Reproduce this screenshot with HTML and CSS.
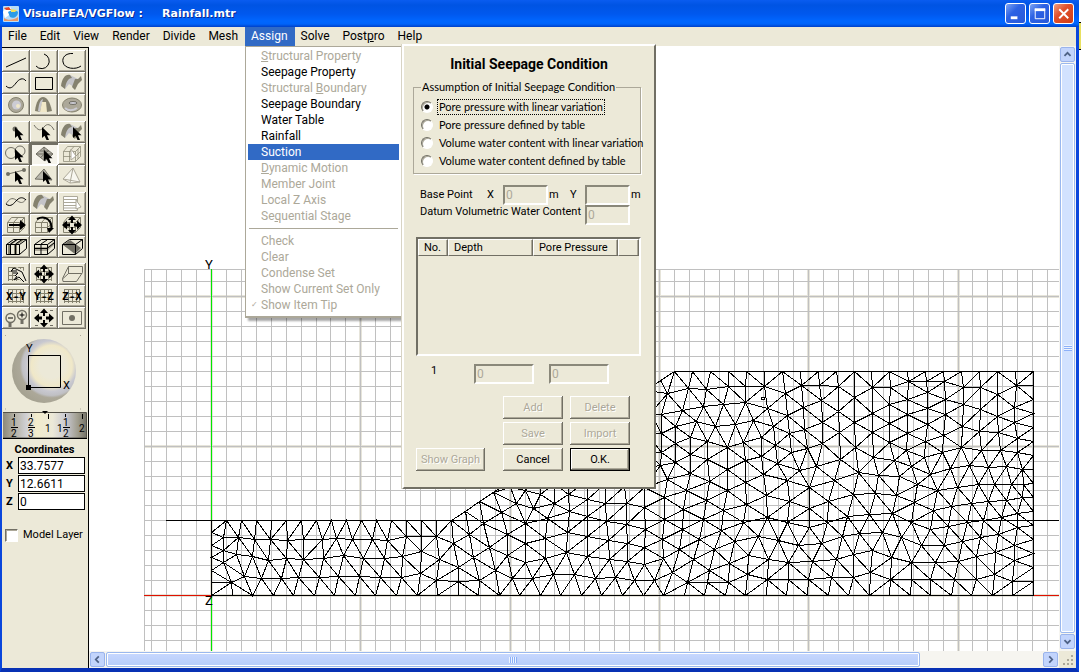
FILE: index.html
```html
<!DOCTYPE html>
<html lang="en">
<head>
<meta charset="utf-8">
<title>VisualFEA/VGFlow : Rainfall.mtr</title>
<link rel="stylesheet" href="styles.css">
</head>
<body>
<svg class="defs" aria-hidden="true">
  <defs>
    <radialGradient id="ball" cx="0.62" cy="0.42" r="0.64">
      <stop offset="0.3" stop-color="#ece9d8"/><stop offset="0.5" stop-color="#f0e8c8"/><stop offset="0.62" stop-color="#c8c8d0"/><stop offset="0.72" stop-color="#c0c0c4"/><stop offset="0.78" stop-color="#aca899"/><stop offset="1" stop-color="#a4a190"/>
    </radialGradient>
    <linearGradient id="drum" x1="0" x2="1" y1="0" y2="0">
      <stop offset="0" stop-color="#8c897a"/><stop offset="0.14" stop-color="#b4b1a4"/><stop offset="0.28" stop-color="#d0d0d4"/><stop offset="0.4" stop-color="#f2eccc"/><stop offset="0.6" stop-color="#ece9d8"/><stop offset="0.76" stop-color="#c8c8d0"/><stop offset="0.9" stop-color="#a09d8e"/><stop offset="1" stop-color="#77756a"/>
    </linearGradient>
    <path id="cursor" d="M0 0V11L2.5 8.700L4.500 13H7L5 8.200H8.500Z"/>
    <g id="surface"><path d="M4 14C5 8 8 3 12 3L20 7L16 15L11 12L7 17Z" fill="#c4c4c8"/><path d="M3 14C4 7 7 2 12 3L14 6C10 6 8 10 7 17Z" fill="#85826f"/><path d="M17 7L20 7L23 4L24 8L20 12L17 18L14 15Z" fill="#85826f"/></g>
    <g id="netgrid" fill="none" stroke="#85826f"><path d="M6.500 4V18M10.500 4V18M14.500 4V18M18.500 4V18M21.500 4V18M6 4.500H22M6 8.500H22M6 12.500H22M6 16.500H22"/></g>
    <g id="cube" fill="none" stroke="#85826f"><path d="M5.500 8.500H17.500V18.500H5.500ZM5.500 8.500L9.500 3.500H22.500L17.500 8.500M22.500 3.500V13.500L17.500 18.500M5.500 13.500H17.500L22.500 8.500M11.500 18V8.500L16 3.500M20 6V16"/></g>
    <g id="fourway"><path d="M14 1.500L18 6H15V9H13V6H10ZM14 20.500L18 16H15V13H13V16H10ZM4 11L9 6.500V9.500H12V12.500H9V15.500ZM24 11L19 6.500V9.500H16V12.500H19V15.500Z"/></g>
    <g id="box" fill="none" stroke="#000"><path d="M4.500 8.500H17.500V18.500H4.500ZM4.500 8.500L11.500 3.500H24.500L17.500 8.500M24.500 3.500V12.500L17.500 18.500"/></g>
  </defs>
</svg>

<div class="desktop">
<div class="window">
  <header class="titlebar">
    <svg class="app-icon" viewBox="0 0 16 16"><rect width="16" height="16" rx="1" fill="#b8dcf8"/><path d="M0 6C3 1 6 0 8 2L6 9L2 12Z" fill="#fff"/><path d="M1 2L6 1L8 4L3 4Z" fill="#e84828"/><path d="M5 6C8 4 13 4 15 6C15 11 10 13 7 11Z" fill="#2a9be8"/><path d="M8 3L14 4L12 6L8 6Z" fill="#f0e060"/><path d="M1 12C5 15 11 14 15 11V15H1Z" fill="#e89868"/></svg>
    <h1 class="title"><span>VisualFEA/VGFlow :</span><span>Rainfall.mtr</span></h1>
    <button class="caption" aria-label="Minimize"><svg viewBox="0 0 20 20"><path d="M5 14.500H12" stroke="#fff" stroke-width="3"/></svg></button>
    <button class="caption" aria-label="Maximize"><svg viewBox="0 0 20 20"><path d="M5.500 5V15.500H15.500V5" fill="none" stroke="#fff"/><path d="M5 6H16" stroke="#fff" stroke-width="3"/></svg></button>
    <button class="caption close" aria-label="Close"><svg viewBox="0 0 20 20"><path d="M5.500 5.500L15 15M15 5.500L5.500 15" stroke="#fff" stroke-width="2"/></svg></button>
  </header>

  <nav class="menubar">
    <button>File</button><button>Edit</button><button>View</button><button>Render</button><button>Divide</button><button>Mesh</button>
    <div class="menu-holder">
      <button class="open" aria-expanded="true">Assign</button>
      <div class="dropdown" role="menu">
        <button role="menuitem" disabled><u>S</u>tructural Property</button>
        <button role="menuitem">Seepage Property</button>
        <button role="menuitem" disabled>Structural <u>B</u>oundary</button>
        <button role="menuitem">Seepage Boundary</button>
        <button role="menuitem">Water Table</button>
        <button role="menuitem">Rainfall</button>
        <button role="menuitem" class="selected">Suction</button>
        <button role="menuitem" disabled><u>D</u>ynamic Motion</button>
        <button role="menuitem" disabled>Member Joint</button>
        <button role="menuitem" disabled>Local Z Axis</button>
        <button role="menuitem" disabled>Se<u>q</u>uential Stage</button>
        <hr>
        <button role="menuitem" disabled>Check</button>
        <button role="menuitem" disabled>Clear</button>
        <button role="menuitem" disabled>Condense Set</button>
        <button role="menuitem" disabled>Show Current Set Only</button>
        <button role="menuitem" class="ticked" disabled>Show Item Tip</button>
      </div>
    </div>
    <button>Solve</button><button>Post<u>p</u>ro</button><button>Help</button>
  </nav>

  <div class="body">
    <aside class="tools">
      <div class="toolgroup">
        <button aria-label="Line"><svg viewBox="0 0 28 22"><path class="k" d="M4 17L24 8"/></svg></button>
        <button aria-label="Arc"><svg viewBox="0 0 28 22"><path class="k" d="M14 4A7.500 7.500 0 1 1 6 16"/></svg></button>
        <button aria-label="Ellipse arc"><svg viewBox="0 0 28 22"><path class="k" d="M15 3.500C7 3 4 8 5 12C6 19 18 20 23 16"/></svg></button>
        <button aria-label="Curve"><svg viewBox="0 0 28 22"><path class="k" d="M4 14C8 18 11 15 14 11S21 5 24 9"/></svg></button>
        <button aria-label="Rectangle"><svg viewBox="0 0 28 22"><path class="k" d="M5.500 5.500H22.500V17.500H5.500Z"/></svg></button>
        <button aria-label="Surface"><svg viewBox="0 0 28 22"><use href="#surface"/></svg></button>
        <button aria-label="Sphere"><svg viewBox="0 0 28 22"><circle cx="14" cy="11" r="7.500" fill="#aca899" stroke="#85826f"/><circle cx="14.500" cy="11" r="4.500" fill="#ccccd4"/><circle cx="16" cy="12" r="2" fill="#f0e8c8"/></svg></button>
        <button aria-label="Arch"><svg viewBox="0 0 28 22"><path d="M5 17C6 8 9 3 13 3S20 8 22 17L17 18H10Z" fill="#85826f"/><path d="M8 17C9 9 10 6 13 5L10 18Z" fill="#c8c8cc"/><path d="M10 18L12 8L16 8L17 18Z" fill="#f0e8c8"/></svg></button>
        <button aria-label="Torus"><svg viewBox="0 0 28 22"><ellipse cx="14" cy="11" rx="9.500" ry="7" fill="#aca899" stroke="#85826f"/><ellipse cx="15" cy="9" rx="4" ry="1.500" fill="#ccccd4" stroke="#716f64"/><path d="M7 14C10 17 15 17 19 14" fill="none" stroke="#ccccd4" stroke-width="2"/></svg></button>
      </div>
      <div class="toolgroup">
        <button aria-label="Pick point"><svg viewBox="0 0 28 22"><circle cx="13" cy="8" r="2.500" fill="#716f64"/><use href="#cursor" x="13" y="6"/></svg></button>
        <button aria-label="Pick curve"><svg viewBox="0 0 28 22"><path class="g" d="M4 4C8 10 11 10 14 6S21 3 24 9"/><use href="#cursor" x="12" y="6"/></svg></button>
        <button aria-label="Pick surface"><svg viewBox="0 0 28 22"><use href="#surface"/><use href="#cursor" x="15" y="6"/></svg></button>
        <button aria-label="Pick loop"><svg viewBox="0 0 28 22"><circle class="g" cx="9" cy="10" r="5.500"/><circle class="g" cx="18" cy="8" r="5"/><use href="#cursor" x="13" y="6"/></svg></button>
        <button class="pressed" aria-label="Pick mesh" aria-pressed="true"><svg viewBox="0 0 28 22"><path d="M6 11L14 4L23 11L15 18Z" fill="#b8b6ac" stroke="#716f64"/><path class="g" d="M6 11H23M10 8H19M14 4V18M10 15L19 7"/><use href="#cursor" x="14" y="7"/></svg></button>
        <button aria-label="Pick solid" disabled><svg viewBox="0 0 28 22"><use href="#cube" opacity="0.700"/><path d="M13 6V17L18 13Z" fill="#fff" stroke="#aca899"/></svg></button>
        <button aria-label="Pick node"><svg viewBox="0 0 28 22"><path class="g" d="M6 9L22 5"/><circle cx="6" cy="9" r="2" fill="#716f64"/><circle cx="22" cy="5" r="2" fill="#716f64"/><use href="#cursor" x="13" y="6"/></svg></button>
        <button aria-label="Pick element"><svg viewBox="0 0 28 22"><path d="M5 14L14 4L22 15Z" fill="#b8b6ac" stroke="#716f64"/><use href="#cursor" x="13" y="6"/></svg></button>
        <button aria-label="Pick tetrahedron" disabled><svg viewBox="0 0 28 22"><path d="M5 14L15 3L22 17L12 18ZM15 3L12 18M5 14L22 17" fill="#f8f7f0" stroke="#aca899"/></svg></button>
      </div>
      <div class="toolgroup">
        <button aria-label="Blend curves"><svg viewBox="0 0 28 22"><path class="g" d="M4 12C7 7 10 5 14 8S21 12 24 7"/><path class="k" d="M4 12C9 16 12 11 15 8S21 5 24 8"/></svg></button>
        <button aria-label="Blend surfaces"><svg viewBox="0 0 28 22"><use href="#surface"/></svg></button>
        <button aria-label="List" disabled><svg viewBox="0 0 28 22"><path d="M5.500 4.500H19.500V18.500H5.500ZM5 7.500H19M5 10.500H19M5 13.500H19M5 16H19" fill="#fff" stroke="#aca899"/><path d="M18 8V17L23 15Z" fill="#fff" stroke="#aca899"/></svg></button>
        <button aria-label="Move"><svg viewBox="0 0 28 22"><use href="#cube"/><path d="M7 10H18V6L24 11L18 16V12H7Z"/></svg></button>
        <button aria-label="Rotate"><svg viewBox="0 0 28 22"><use href="#cube"/><path d="M7 5C15 1 23 6 21 16" fill="none" stroke="#000" stroke-width="2"/><path d="M17 14H24L19 19Z"/></svg></button>
        <button aria-label="Scale"><svg viewBox="0 0 28 22"><use href="#cube"/><use href="#fourway"/></svg></button>
        <button aria-label="Slice X"><svg viewBox="0 0 28 22"><path d="M6 9L13 4H16L9 9V18H6ZM12 9L19 4H22L15 9V18H12Z" fill="#85826f"/><use href="#box"/><path class="k" d="M8.500 18V8L15 3.500M13.500 18V8L20 3.500"/></svg></button>
        <button aria-label="Slice Y"><svg viewBox="0 0 28 22"><path d="M5 11H17L24 6V9L17 15H5Z" fill="#aca899"/><use href="#box"/><path class="k" d="M5 12.500H17L24 7M11 18V8L17 4"/></svg></button>
        <button aria-label="Slice Z"><svg viewBox="0 0 28 22"><path d="M5 9L12 4L23 12L17 18Z" fill="#716f64"/><use href="#box"/></svg></button>
      </div>
      <div class="toolgroup">
        <button aria-label="Pan"><svg viewBox="0 0 28 22"><use href="#netgrid"/><path d="M10 8L15 4L24 9V18H19L14 13Z" fill="#ece9d8"/><path class="k" d="M24 18L20 9L12 5L9 8L15 8M11 10L16 10L13 13M15 13L12 17L17 14L22 19"/></svg></button>
        <button aria-label="Shift view"><svg viewBox="0 0 28 22"><use href="#netgrid"/><use href="#fourway"/></svg></button>
        <button aria-label="Perspective"><svg viewBox="0 0 28 22"><path class="g" d="M4.500 15.500L10.500 3.500H24.500V9.500L18.500 18.500H5ZM10.500 3.500V10.500L4.500 16M10 10.500H24"/></svg></button>
        <button aria-label="X-Y view"><svg viewBox="0 0 28 22"><use href="#netgrid"/><text x="14" y="15">X-Y</text></svg></button>
        <button aria-label="Y-Z view"><svg viewBox="0 0 28 22"><use href="#netgrid"/><text x="14" y="15">Y-Z</text></svg></button>
        <button aria-label="Z-X view"><svg viewBox="0 0 28 22"><use href="#netgrid"/><text x="14" y="15">Z-X</text></svg></button>
        <button aria-label="Zoom"><svg viewBox="0 0 28 22"><path d="M8 14V20M20 12V17" stroke="#716f64" stroke-width="3"/><g fill="#ece9d8" stroke="#716f64" stroke-width="1.500"><circle cx="8.500" cy="11" r="4.500"/><circle cx="20" cy="8" r="4.500"/></g><path class="k" d="M6 11H11M17.500 8H22.500M20 5.500V10.500"/></svg></button>
        <button aria-label="Fit"><svg viewBox="0 0 28 22"><path class="g" d="M5 3.500H8M20 3.500H23M5 18.500H8M20 18.500H23"/><use href="#fourway"/></svg></button>
        <button aria-label="Centre"><svg viewBox="0 0 28 22"><path class="g" d="M4.500 4.500H23.500V17.500H4.500Z"/><circle cx="14" cy="11" r="3" fill="#716f64"/></svg></button>
      </div>

      <svg class="trackball" viewBox="0 2 84 77"><circle cx="41" cy="39" r="32" fill="url(#ball)"/><path d="M25.500 23.500H57.500V55.500H25.500Z" fill="none" stroke="#000"/><path d="M23 53H28V58H23Z"/><text x="23" y="20">Y</text><text x="60" y="57">X</text><path d="M2 3.500H3M77 3.500H78M2 77H3M77 77H78" stroke="#aca899"/></svg>
      <svg class="drum" viewBox="0 0 84 28"><path d="M0 2H83V27H0Z" fill="url(#drum)"/><path d="M0 1.500H83.500V27H0" fill="none" stroke="#55534a"/><path d="M0 27.500H84" stroke="#000"/><path d="M39 0H45L42 3Z"/><path d="M11.500 3V6M28.500 3V6M45.500 3V8M62.500 3V6M79.500 3V8" stroke="#000"/><g><text x="8" y="15">1</text><path d="M8 16.500H15M25 16.500H32M60 16.500H67" stroke="#000"/><text x="8" y="26">2</text><text x="25" y="15">2</text><text x="25" y="26">3</text><text x="42" y="21">1</text><text x="54" y="21">1</text><text x="60" y="15">1</text><text x="60" y="26">2</text><text x="76" y="21">2</text></g></svg>

      <h2 class="coords-title">Coordinates</h2>
      <div class="coords">
        <label for="cx">X</label><input id="cx" value="33.7577">
        <label for="cy">Y</label><input id="cy" value="12.6611">
        <label for="cz">Z</label><input id="cz" value="0">
      </div>
      <label class="layer"><input type="checkbox">Model Layer</label>
    </aside>

    <main class="view">
      <svg class="model" id="model" role="img" aria-label="Finite element mesh of the slope"></svg>
      <div class="vscroll">
        <button aria-label="Scroll up"><svg viewBox="0 0 15 15"><path d="M4 9L7.500 5.500L11 9"/></svg></button>
        <div class="thumb"></div>
        <button aria-label="Scroll down"><svg viewBox="0 0 15 15"><path d="M4 6L7.500 9.500L11 6"/></svg></button>
      </div>
      <div class="hscroll">
        <button aria-label="Scroll left"><svg viewBox="0 0 15 15"><path d="M9 4L5.500 7.500L9 11"/></svg></button>
        <div class="track"><div class="thumb"></div></div>
        <button aria-label="Scroll right"><svg viewBox="0 0 15 15"><path d="M6 4L9.500 7.500L6 11"/></svg></button>
      </div>
      <svg class="grip" viewBox="0 0 17 17"><path d="M12 4h2v2h-2zM12 8h2v2h-2zM12 12h2v2h-2zM8 8h2v2h-2zM8 12h2v2h-2zM4 12h2v2h-2z" fill="#aca899"/></svg>
    </main>
  </div>

  <form class="dialog" role="dialog" aria-labelledby="dlg-title">
    <h2 id="dlg-title">Initial Seepage Condition</h2>
    <fieldset>
      <legend>Assumption of Initial Seepage Condition</legend>
      <label><input type="radio" name="cond" checked><span class="focused">Pore pressure with linear variation</span></label>
      <label><input type="radio" name="cond"><span>Pore pressure defined by table</span></label>
      <label><input type="radio" name="cond"><span>Volume water content with linear variation</span></label>
      <label><input type="radio" name="cond"><span>Volume water content defined by table</span></label>
    </fieldset>
    <div class="base">
      <span>Base Point</span>
      <label for="bx">X</label><input id="bx" value="0" disabled><span>m</span>
      <label for="by">Y</label><input id="by" value="" disabled><span>m</span>
      <label class="datum" for="dw">Datum Volumetric Water Content</label><input id="dw" value="0" disabled>
    </div>
    <div class="list">
      <table>
        <thead><tr><th class="c-no">No.</th><th class="c-val">Depth</th><th class="c-val">Pore Pressure</th><th></th></tr></thead>
      </table>
    </div>
    <div class="entry">
      <span>1</span><input aria-label="Depth" value="0" disabled><input aria-label="Pore Pressure" value="0" disabled>
    </div>
    <div class="actions">
      <button type="button" class="col2" disabled>Add</button><button type="button" disabled>Delete</button>
      <button type="button" class="col2" disabled>Save</button><button type="button" disabled>Import</button>
      <button type="button" disabled>Show Graph</button><button type="button" class="col2">Cancel</button><button type="button" class="default">O.K.</button>
    </div>
  </form>
</div>
<div class="behind"></div>
</div>
<script src="mesh.js"></script>
</body>
</html>
```
FILE: styles.css
```css
* { box-sizing: border-box; }
body { margin: 0; font: 11px/16px Roboto, "Liberation Sans", Arial, sans-serif; color: #000; overflow: hidden; }
button, input { font: inherit; color: inherit; margin: 0; }
button { border: 0; padding: 0; background: #ece9d8; }
h1, h2 { margin: 0; font-weight: bold; }
.defs { position: absolute; width: 0; height: 0; }
.desktop { display: flex; height: 100vh; }
.behind { width: 2px; background: linear-gradient(#fff 22px, #000 22px 23px, #e8e060 23px 49px, #000 49px 50px, #fff 50px); }
.window { flex: 1; min-width: 0; position: relative; display: flex; flex-direction: column; border: solid #0a46dc; border-width: 0 3px 4px 2px; border-bottom-color: #0831b4; background: #ece9d8; }

.titlebar { flex: none; height: 27px; margin: 0 -3px 0 -2px; padding: 0 5px 0 3px; display: flex; align-items: center; gap: 3px; background: linear-gradient(#0a5cf0, #0054e3 5px, #0058ee 14px, #0066ff 21px, #0064fa 24px, #0040c8); }
.app-icon { width: 16px; height: 16px; }
.title { flex: 1; display: flex; gap: 19px; padding-left: 1px; font: bold 11px/16px "DejaVu Sans", Verdana, sans-serif; color: #fff; text-shadow: 1px 1px #0a2a90; }
.caption { width: 21px; height: 21px; border: 1px solid #fff; border-radius: 3px; background: linear-gradient(135deg, #7ea4f4, #2c62e4 40%, #2858d8); }
.caption svg { display: block; width: 19px; height: 19px; }
.caption.close { background: linear-gradient(135deg, #f0a080, #e0502c 40%, #d03c14); }

.menubar { flex: none; height: 19px; display: flex; font: 12px/16px Roboto, sans-serif; }
.menubar > button, .menu-holder > button { height: 19px; padding: 0 7px 2px 6px; }
.menu-holder { position: relative; }
.menu-holder > .open { background: #316ac5; color: #fff; }
.dropdown { position: absolute; z-index: 2; top: 100%; left: 0; width: 157px; padding: 1px 2px 3px; background: #fff; border: 1px solid #aca899; border-bottom-width: 2px; box-shadow: 3px 3px 2px rgba(0,0,0,.35); }
.dropdown button { display: block; width: 100%; height: 16px; line-height: 16px; padding-left: 13px; text-align: left; background: none; white-space: nowrap; }
.dropdown button:disabled { color: #aca899; }
.dropdown .selected { background: #316ac5; color: #fff; }
.dropdown hr { border: 0; height: 1px; margin: 4px 1px; background: #aca899; }
.dropdown .ticked::before { content: "✓"; float: left; margin-left: -10px; width: 10px; font: bold 8px/16px "DejaVu Sans", sans-serif; }

.body { flex: 1; min-height: 0; display: flex; }
.tools { flex: none; width: 87px; border: 1px solid #000; border-width: 1px 1px 0 0; margin-top: 1px; padding: 2px 1px 0 0; background: #ece9d8; }
.toolgroup { display: grid; grid-template-columns: repeat(3, 28px); grid-auto-rows: 22px; margin-bottom: 5px; }
.toolgroup button { box-shadow: inset -1px -1px #716f64, inset 1px 1px #fff, inset -2px -2px #aca899; }
.toolgroup button.pressed { background: #f6f4ec; box-shadow: inset 2px 2px #716f64, inset -1px -1px #fff; }
.toolgroup svg { display: block; width: 28px; height: 22px; }
.toolgroup text { font: bold 11px "DejaVu Sans Mono", monospace; text-anchor: middle; }
.k { fill: none; stroke: #000; }
.g { fill: none; stroke: #716f64; }
.trackball, .drum { display: block; width: 84px; margin-left: 1px; font: 11px Roboto, sans-serif; }
.trackball { height: 77px; }
.drum { height: 28px; font-size: 10px; }
.coords-title { margin-top: 3px; font-size: 11px; line-height: 15px; text-align: center; }
.coords { display: grid; grid-template-columns: 11px 67px; column-gap: 1px; row-gap: 1px; padding-left: 4px; }
.coords label { font-weight: bold; font-size: 11px; line-height: 17px; }
.coords input { width: 67px; height: 17px; padding: 0 1px; border: 1px solid #000; background: #fff; font-size: 12px; line-height: 15px; }
.layer { display: flex; align-items: center; gap: 5px; margin: 17px 0 0 3px; white-space: nowrap; }
.layer input { appearance: none; width: 13px; height: 13px; background: #fff; border: 1px solid; border-color: #716f64 #fff #fff #716f64; box-shadow: inset 1px 1px #aca899; }

.view { flex: 1; min-width: 0; display: grid; grid-template: minmax(0, 1fr) 17px / minmax(0, 1fr) 17px; background: #fff; }
.model { width: 100%; height: 100%; display: block; shape-rendering: crispEdges; font: 13px Roboto, sans-serif; }
.model .minor { stroke: #c0c0c0; }
.model .halo { stroke: #e6e4da; stroke-width: 3; }
.vscroll, .hscroll { display: flex; gap: 1px; padding: 1px; background: #f6f5f0; }
.vscroll { flex-direction: column; padding-bottom: 2px; }
.vscroll button, .hscroll button { flex: none; width: 15px; height: 15px; border: 1px solid #9ab4ec; border-radius: 2px; background: #c2d4fc; }
.vscroll button svg, .hscroll button svg { display: block; width: 13px; height: 13px; fill: none; stroke: #4d6185; stroke-width: 2; }
.thumb { border: 1px solid #9ab8ee; border-radius: 2px; box-shadow: inset 0 0 0 1px #fff; display: flex; align-items: center; justify-content: center; }
.thumb::after { content: ""; width: 8px; height: 6px; }
.vscroll .thumb { flex: 1; background: #d2e2fe; }
.vscroll .thumb::after { background: repeating-linear-gradient(#eef4fe 0 1px, #8cb0f8 1px 2px); }
.hscroll .track { flex: 1; min-width: 0; display: flex; }
.hscroll .thumb { width: 87%; background: linear-gradient(#c8d8fe, #b6ccfa); }
.hscroll .thumb::after { background: repeating-linear-gradient(90deg, #eef4fe 0 1px, #8cb0f8 1px 2px); }
.grip { width: 17px; height: 17px; background: #ece9d8; }

.dialog { position: absolute; z-index: 3; left: 400px; top: 44px; width: 254px; padding: 9px 13px 16px 9px; background: #ece9d8; border: 2px solid; border-color: #fff #716f64 #716f64 #fff; box-shadow: -1px 0 #d8d4c4; line-height: 14px; }
.dialog h2 { font-size: 14px; line-height: 18px; text-align: center; padding-left: 4px; }
.dialog fieldset { margin: 7px 0 0; padding: 4px 0 3px 7px; border: 1px solid #aca899; box-shadow: 1px 1px #fff; min-width: 0; font-family: Lato, "Liberation Sans", sans-serif; }
.dialog legend { padding: 0 1px; background: #ece9d8; }
.dialog fieldset label { display: flex; align-items: center; gap: 4px; height: 18px; white-space: nowrap; }
.dialog fieldset span { padding: 0 1px; border: 1px solid transparent; }
.dialog fieldset .focused { border: 1px dotted #000; }
.dialog input[type=radio] { appearance: none; flex: none; width: 12px; height: 12px; border-radius: 50%; background: #fff; border: 1px solid; border-color: #716f64 #fff #fff #716f64; box-shadow: inset 1px 1px #aca899; }
.dialog input[type=radio]:checked { background: radial-gradient(circle, #000 2px, #fff 3px); }
.dialog input:disabled { color: #aca899; background: #ece9d8; border: 2px solid; border-color: #8a887a #fff #fff #8a887a; padding: 0 1px; height: 20px; width: 100%; min-width: 0; font-size: 12px; }
.base { display: grid; grid-template-columns: 67px 16px 45px 22px 15px 45px 1fr; align-items: center; margin: 11px 0 0 7px; }
.base span:nth-child(4), .base span:nth-child(7) { padding-left: 1px; }
.base .datum { grid-column: 1 / 6; align-self: start; white-space: nowrap; }
.list { margin: 12px 0 0 3px; width: 225px; height: 119px; border: 2px solid; border-color: #716f64 #fff #fff #716f64; }
.list table { width: 100%; table-layout: fixed; border-collapse: separate; border-spacing: 0; }
.list th { height: 17px; padding: 0 5px; text-align: left; font-weight: normal; line-height: 14px; border: 1px solid; border-color: #fff #716f64 #716f64 #fff; box-shadow: inset -1px 0 #aca899; white-space: nowrap; }
.list .c-no { width: 30px; }
.list .c-val { width: 85px; }
.entry { display: grid; grid-template-columns: 42px 60px 60px; column-gap: 15px; margin: 8px 0 0 4px; }
.entry span { padding-left: 14px; }
.actions { display: grid; grid-template-columns: 69px 4px 60px 60px; column-gap: 7px; row-gap: 3px; margin: 12px 0 0 3px; }
.actions .col2 { grid-column: 3; }
.actions button { height: 23px; box-shadow: inset -1px -1px #716f64, inset 1px 1px #fff, inset -2px -2px #aca899; white-space: nowrap; }
.actions button:disabled { color: #aca899; text-shadow: 1px 1px #fff; }
.actions .default { border: 1px solid #000; }
```
FILE: mesh.js
```js
// Draws the work grid, the axes and the triangulated slope model.
const NS = "http://www.w3.org/2000/svg";
const svg = document.getElementById("model");
const root = document.createElementNS(NS, "g");
root.setAttribute("transform", "translate(-89 -46)");
svg.appendChild(root);

function add(tag, attrs, text) {
  const el = document.createElementNS(NS, tag);
  for (const k in attrs) el.setAttribute(k, attrs[k]);
  if (text) el.textContent = text;
  root.appendChild(el);
}

const L = 144, R = 1059, T = 269, B = 651, X0 = 211, Y0 = 595, STEP = 14.93;
let minor = "", major = "";
function gridLine(k, vertical) {
  const p = Math.round(vertical ? X0 + k * STEP : Y0 - k * STEP) + 0.5;
  const d = vertical ? `M${p} ${T}V${B}` : `M${L} ${p}H${R}`;
  minor += d;
  if (k % 10 === 0) major += d;
}
for (let k = -4; k <= 56; k++) gridLine(k, true);
for (let k = -3; k <= 21; k++) gridLine(k, false);
add("path", { d: major, class: "halo" });
add("path", { d: minor + `M${L + .5} ${T}V${B}M${L} ${T + .5}H${R}`, class: "minor" });
add("path", { d: `M211.5 ${T}V${B}`, stroke: "#00e800" });
add("path", { d: `M${L} 595.5H${R}`, stroke: "#e01000" });
add("path", { d: `M166 520.5H${R}`, stroke: "#000" });

// Interior nodes by patch: origin in pixels, offsets in thirds of a pixel.
const patches = [
  [200, 480, "70,172 115,172 163,178 210,176 262,179 308,178 365,176 408,174 455,176 515,177 562,180 617,169 662,169 707,169 760,190 70,211 107,222 157,228 203,239 257,235 310,236 368,233 428,225 490,233 553,235 607,227 663,214 718,238 70,247 93,306 133,287 182,294 242,294 295,290 358,290 415,287 478,287 541,292 602,292 659,280 709,300 773,260 773,302 836,300 850,130 808,161 820,230 868,200 885,270"],
  [480, 470, "96,325 157,325 220,311 282,311 344,323 406,321 461,331 523,331 575,305 80,254 134,277 195,263 259,246 322,257 386,266 440,274 493,283 548,263 80,193 134,219 196,203 261,186 320,198 383,209 440,220 493,231 547,206 63,127 134,159 200,143 268,123 322,139 379,152 437,163 495,176 552,148 107,100 158,115 222,99 265,72 322,86 376,98 437,100 493,112 553,82 562,28 180,72 134,60 90,50 222,40 320,30 376,40 432,48 493,50 265,20 180,15 140,10 220,-15 300,-30 360,-15 420,-10 480,-5 505,-50 440,-70 380,-80 320,-90 260,-60 500,-110 450,-130 400,-140 350,-150 510,-170 460,-190 410,-200 500,-230 540,-15"],
  [660, 360, "22,98 85,85 138,86 203,79 256,79 312,79 374,98 424,76 478,74 533,77 65,151 128,138 190,132 256,126 320,145 382,164 430,142 482,121 533,154 2,162 46,197 108,184 164,199 226,193 278,181 340,199 386,220 433,208 486,187 536,216 2,220 46,250 89,232 142,244 200,260 250,245 302,232 346,254 392,277 440,265 487,250 539,296 2,275 46,307 89,283 142,298 254,301 304,287 350,310 418,330 467,318 89,338 146,364 200,326 254,367 310,343 380,361 448,382 521,361 79,390 137,419 200,391 259,432 317,405 386,424 446,443 505,424 70,446 128,477 190,449 250,486 322,470 382,486 446,502 502,486 562,467 66,506 118,538 182,509 223,543 293,528 353,540 415,554 484,549 545,528 57,568 163,568 100,598 206,608 264,584 323,597 383,607 456,603 528,597 146,629 260,642 320,656 383,656 443,656 514,650 80,667 140,667 203,667"],
  [850, 360, "13,110 65,82 119,82 175,64 227,64 281,64 340,82 391,82 440,101 497,76 65,160 117,133 171,116 230,97 284,116 340,133 391,148 493,142 440,167 13,187 65,215 116,190 171,163 230,145 284,163 335,199 386,214 443,216 493,185 116,247 171,220 230,193 280,226 226,243 169,270 502,235 500,276 16,262 70,291 131,299 222,291 276,275 333,262 392,270 449,271 23,337 84,344 147,349 184,319 241,341 299,325 358,316 415,322 467,319 517,328 202,371 260,390 320,380 383,371 431,371 482,371 520,371 9,403 74,398 137,405 193,425 250,450 304,437 364,428 415,422 467,419 517,412 58,463 127,460 184,486 241,508 295,497 350,485 398,480 452,470 502,460 502,502 28,518 97,515 154,532 213,556 283,556 337,544 391,532 443,523 10,583 67,571 124,590 182,606 254,605 323,602 379,589 436,577 493,556 493,600 8,650 61,636 119,656 182,656 241,656 313,656 377,656 433,643 487,663"]
];
const nodes = [];
const put = (x, y) => {
  if (!nodes.some(n => Math.hypot(n[0] - x, n[1] - y) < 4)) nodes.push([x, y]);
};
for (let i = 0; i <= 16; i++) put(211 + i * 15, 520);
for (let i = 1; i <= 16; i++) put(451 + i * 223 / 16, 520 - i * 149 / 16);
for (let i = 1; i <= 20; i++) put(674 + i * 17.95, 371);
for (let i = 1; i <= 16; i++) put(1033, 371 + i * 14);
[532, 545, 557, 570, 582, 595].forEach(y => put(211, y));
for (let i = 1; i < 40; i++) put(211 + i * 20.55, 595);
for (const [ox, oy, list] of patches) {
  for (const pair of list.split(" ")) {
    const [a, b] = pair.split(",").map(Number);
    put(ox + a / 3, oy + b / 3);
  }
}

// Incremental Delaunay triangulation.
function triangulate(pts) {
  const n = pts.length;
  const p = pts.concat([[-20000, -20000], [22000, -20000], [600, 30000]]);
  const make = (a, b, c) => {
    const [ax, ay] = p[a], [bx, by] = p[b], [cx, cy] = p[c];
    const d = 2 * (ax * (by - cy) + bx * (cy - ay) + cx * (ay - by));
    if (Math.abs(d) < 1e-9) return { v: [a, b, c], x: 0, y: 0, r: Infinity };
    const A = ax * ax + ay * ay, Q = bx * bx + by * by, C = cx * cx + cy * cy;
    const x = (A * (by - cy) + Q * (cy - ay) + C * (ay - by)) / d;
    const y = (A * (cx - bx) + Q * (ax - cx) + C * (bx - ax)) / d;
    return { v: [a, b, c], x, y, r: (ax - x) ** 2 + (ay - y) ** 2 };
  };
  let tris = [make(n, n + 1, n + 2)];
  for (let i = 0; i < n; i++) {
    const edges = new Map();
    tris = tris.filter(t => {
      if ((p[i][0] - t.x) ** 2 + (p[i][1] - t.y) ** 2 >= t.r) return true;
      for (let k = 0; k < 3; k++) {
        const a = t.v[k], b = t.v[(k + 1) % 3];
        const key = Math.min(a, b) + "_" + Math.max(a, b);
        if (edges.has(key)) edges.delete(key); else edges.set(key, [a, b]);
      }
      return false;
    });
    for (const [a, b] of edges.values()) tris.push(make(a, b, i));
  }
  return tris.filter(t => t.v.every(k => k < n)).map(t => t.v);
}

const surface = x => x < 451 ? 520 : x < 674 ? 520 - (x - 451) * 149 / 223 : 371;
let d = "";
for (const v of triangulate(nodes)) {
  const pts = v.map(k => nodes[k]);
  const cx = (pts[0][0] + pts[1][0] + pts[2][0]) / 3;
  const cy = (pts[0][1] + pts[1][1] + pts[2][1]) / 3;
  if (cy <= surface(cx) + 0.5) continue;
  d += "M" + pts.map(q => `${Math.round(q[0]) + .5} ${Math.round(q[1]) + .5}`).join("L") + "Z";
}
add("path", { d: d + "M211.5 520.5V595.5H1033.5V371.5H674.5L451.5 520.5Z", fill: "none", stroke: "#000" });
add("rect", { x: 761.5, y: 397.5, width: 3, height: 2, fill: "#fff", stroke: "#000" });
add("text", { x: 205, y: 269 }, "Y");
add("text", { x: 205, y: 605 }, "Z");
```
